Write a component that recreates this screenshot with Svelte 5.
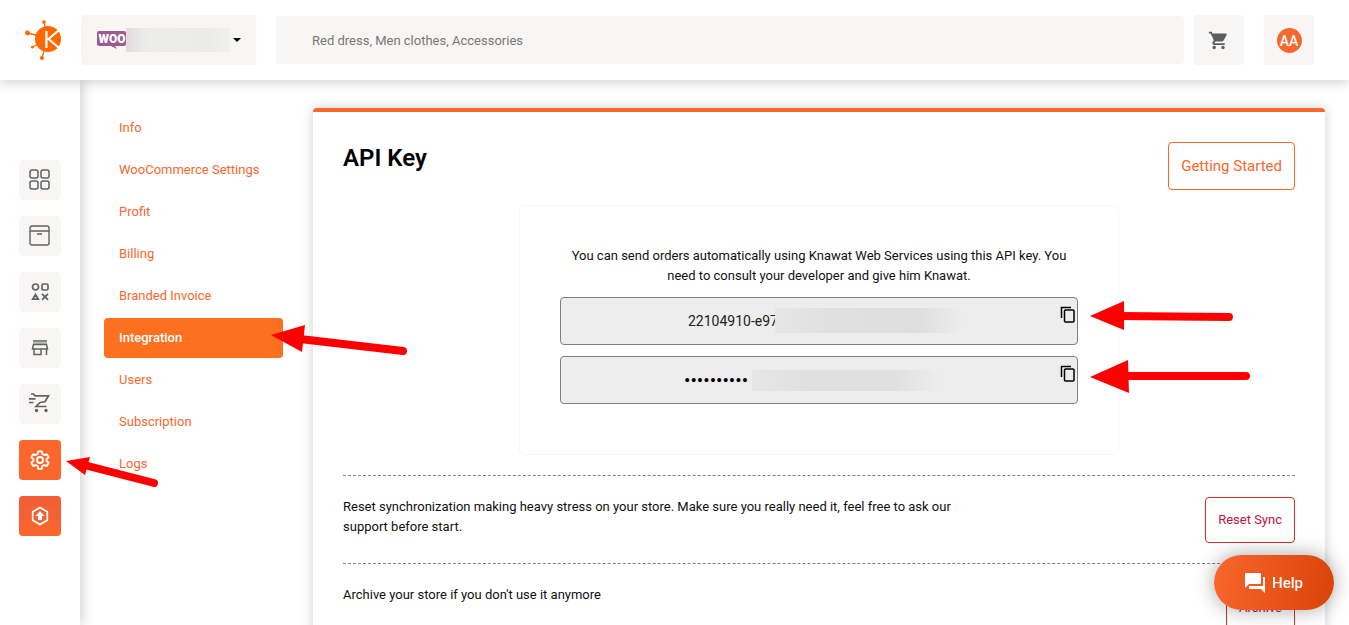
<script lang="ts">
    const menu = ["Info", "WooCommerce Settings", "Profit", "Billing", "Branded Invoice", "Integration", "Users", "Subscription", "Logs"];
    const rail = ["dashboard", "products", "categories", "store", "orders", "settings", "upgrade"];

    let active = $state("Integration");
    let search = $state("");

    const apiKey = "22104910-e97";
    const apiSecret = "knawat-key";

    function copy(value: string) {
        navigator.clipboard?.writeText(value);
    }
</script>

{#snippet copyIcon()}
    <svg width="16" height="18" viewBox="0 0 16 18" fill="none" stroke="#000" stroke-width="1.5">
        <path d="M1.5 12V1.5H11" />
        <rect x="4.5" y="4" width="9.5" height="12" rx="1" />
    </svg>
{/snippet}

<header>
    <a class="logo" href="/" aria-label="Home">
        <svg width="38" height="42" viewBox="0 0 38 42">
            <g stroke="#ff6700" stroke-width="1.3">
                <path d="M20 3l1.500 6M3.500 14l10 2.500M8.500 28l5-2.500M18 39l2.500-9" />
            </g>
            <g fill="#ff6700">
                <circle cx="20" cy="3" r="1.800" />
                <circle cx="3.500" cy="14" r="2.400" />
                <circle cx="8.500" cy="28" r="1.600" />
                <circle cx="18" cy="39" r="2.100" />
                <circle cx="24" cy="20" r="13" />
            </g>
            <path d="M22.400 12v17M34.500 11.500L24.500 20L34.500 28.500" fill="none" stroke="#fff" stroke-width="2.200" />
        </svg>
    </a>
    <label class="store-select">
        <svg width="29" height="18" viewBox="0 0 29 18">
            <path d="M2 0h25a2 2 0 0 1 2 2v11a2 2 0 0 1-2 2h-9l2 3-6-3H2a2 2 0 0 1-2-2V2a2 2 0 0 1 2-2z" fill="#9b5c8f" />
            <text x="15" y="12" text-anchor="middle" font-family="Roboto, sans-serif" font-weight="900" font-size="12" fill="#fff">WOO</text>
        </svg>
        <select aria-label="Store"><option></option></select>
        <svg class="caret" width="8" height="4" viewBox="0 0 8 4"><path d="M0 0h8L4 4z" /></svg>
    </label>
    <input class="search" type="search" aria-label="Search products" placeholder="Red dress, Men clothes, Accessories" bind:value={search} />
    <button class="square" aria-label="Cart">
        <svg width="24" height="24" viewBox="0 0 24 24" fill="#5c5f60">
            <path d="M7 18a2 2 0 1 0 0 4 2 2 0 0 0 0-4zM1 2v2h2l3.600 7.600L5.200 14c-.7 1.300.3 3 1.800 3h12v-2H7.400l1.100-2H16c.7 0 1.400-.4 1.700-1l3.600-6.500A1 1 0 0 0 20.400 4H5.200l-.9-2H1zM17 18a2 2 0 1 0 0 4 2 2 0 0 0 0-4z" transform="translate(1 2) scale(.88)" />
        </svg>
    </button>
    <button class="square account"><span class="avatar">AA</span></button>
</header>

<div class="layout">
    <nav class="rail">
        {#each rail as item (item)}
            <a href="/{item}" aria-label={item} class:hot={item === "settings"} class:upgrade={item === "upgrade"}>
                {#if item === "dashboard"}
                    <svg width="22" height="22" viewBox="0 0 22 22" fill="none" stroke="#626262" stroke-width="1.5">
                        <rect x="1" y="1" width="8" height="8" rx="2" />
                        <rect x="12" y="1" width="8" height="8" rx="2" />
                        <rect x="1" y="12" width="8" height="8" rx="2" />
                        <rect x="12" y="12" width="8" height="8" rx="2" />
                    </svg>
                {:else if item === "products"}
                    <svg width="22" height="22" viewBox="0 0 22 22" fill="none" stroke="#626262" stroke-width="1.4">
                        <rect x="1" y="1" width="19" height="19" rx="2" />
                        <path d="M1 6h19M8 9h5" />
                    </svg>
                {:else if item === "categories"}
                    <svg width="18" height="18" viewBox="0 0 18 18" fill="none" stroke="#626262" stroke-width="1.700">
                        <circle cx="4.500" cy="4" r="3" />
                        <rect x="11" y="1" width="6" height="6" rx="1.500" />
                        <path d="M4.500 11.500L1.700 16.200h5.600zM11 10.800l6 6M17 10.800l-6 6" />
                    </svg>
                {:else if item === "store"}
                    <svg width="18" height="16" viewBox="0 0 18 16" fill="none" stroke="#626262" stroke-width="1.500">
                        <path d="M2 1h14" />
                        <path d="M2 3h14" stroke="#aaa" />
                        <path d="M2.500 4.500h13l1 4.500h-15zM3 9v5.500h7V9M15.500 9v6" />
                    </svg>
                {:else if item === "orders"}
                    <svg width="22" height="22" viewBox="0 0 22 22" fill="none" stroke="#626262" stroke-width="1.700">
                        <path d="M2 1h2.500l1.500 1.800h13.500l-3.500 6-5 .7-4 4h10.500M0 5.800h6.500M0 9.500h4.500" />
                        <circle cx="7.500" cy="17.500" r="1.700" fill="#626262" stroke="none" />
                        <circle cx="17" cy="17.500" r="1.700" fill="#626262" stroke="none" />
                    </svg>
                {:else if item === "settings"}
                    <svg width="22" height="22" viewBox="0 0 24 24" fill="none" stroke="#fff" stroke-width="2" stroke-linejoin="round">
                        <path d="M10 2.500h4l.6 3 1.900 1.100 2.900-1 2 3.500-2.300 2v1.900l2.300 2-2 3.500-2.900-1-1.900 1.100-.6 3h-4l-.6-3-1.900-1.100-2.900 1-2-3.500 2.300-2v-1.900l-2.300-2 2-3.500 2.900 1 1.900-1.100z" />
                        <circle cx="12" cy="12" r="3.300" />
                    </svg>
                {:else}
                    <svg width="20" height="20" viewBox="0 0 20 20">
                        <path d="M10 1.500l7.300 4.200v8.600L10 18.500l-7.300-4.200V5.700z" fill="none" stroke="#fff" stroke-width="1.700" />
                        <path d="M10 5l4.500 5H12v4H8v-4H5.500z" fill="#fff" />
                    </svg>
                {/if}
            </a>
        {/each}
    </nav>

    <nav class="menu">
        {#each menu as item (item)}
            <a href="#{item}" class:active={item === active} onclick={() => (active = item)}>{item}</a>
        {/each}
    </nav>

    <main>
        <div class="title">
            <h1>API Key</h1>
            <button class="outline">Getting Started</button>
        </div>
        <section class="keys">
            <p>You can send orders automatically using Knawat Web Services using this API key. You need to consult your developer and give him Knawat.</p>
            <div class="field">
                <input type="text" aria-label="API key" readonly value={apiKey} />
                <span class="mask key-mask"></span>
                <button aria-label="Copy API key" onclick={() => copy(apiKey)}>{@render copyIcon()}</button>
            </div>
            <div class="field">
                <input type="password" aria-label="API secret" readonly value={apiSecret} />
                <span class="mask secret-mask"></span>
                <button aria-label="Copy API secret" onclick={() => copy(apiSecret)}>{@render copyIcon()}</button>
            </div>
        </section>
        <section class="row">
            <p>Reset synchronization making heavy stress on your store. Make sure you really need it, feel free to ask our support before start.</p>
            <button class="outline danger">Reset Sync</button>
        </section>
        <section class="row">
            <p>Archive your store if you don't use it anymore</p>
            <button class="outline danger">Archive</button>
        </section>
    </main>
</div>

<button class="help">
    <svg width="20" height="20" viewBox="0 0 20 20" fill="#fff">
        <path d="M1 0h14a1 1 0 0 1 1 1v9a1 1 0 0 1-1 1H4l-4 4V1a1 1 0 0 1 1-1z" />
        <path d="M18 4h1a1 1 0 0 1 1 1v15l-4-4H5a1 1 0 0 1-1-1v-2h14z" />
    </svg>
    Help
</button>

<svg class="arrows" width="1349" height="625" viewBox="0 0 1349 625" fill="#f00" stroke="#f00" stroke-linecap="round" aria-hidden="true">
    <path d="M300 339L403 351M1120 316L1229 317M1125 376L1246 376M88 466L154 483" stroke-width="8" />
    <path d="M271 335L305 325L302 352zM1090 316L1124 301V330zM1090 377L1128 360L1129 393zM66 461L90 457L85 475z" stroke="none" />
</svg>

<style>
    :global(body) {
        margin: 0;
        background: white;
        font-family: Roboto, "Noto Sans", sans-serif;
        font-size: 13px;
        line-height: 20px;
        color: #111;
    }

    :global(html) {
        scrollbar-width: none;
    }

    button, input, select {
        font: inherit;
        box-sizing: border-box;
    }

    button {
        cursor: pointer;
    }

    a {
        text-decoration: none;
    }

    header {
        position: sticky;
        top: 0;
        z-index: 2;
        display: flex;
        align-items: center;
        height: 80px;
        box-sizing: border-box;
        padding: 0 35px 0 24px;
        background: white;
        box-shadow: 0 2px 12px rgba(0, 0, 0, 0.2);
    }

    .logo {
        display: flex;
        width: 57px;
    }

    .store-select {
        display: flex;
        align-items: center;
        width: 175px;
        height: 50px;
        box-sizing: border-box;
        padding: 0 15px 0 16px;
        margin-right: 20px;
        border-radius: 4px;
        background: #f7f6f4;
    }

    .store-select select {
        flex: 1;
        min-width: 0;
        height: 24px;
        appearance: none;
        border: none;
        background: linear-gradient(90deg, #e3dae0, #ececeb 20%, #ebebea 80%, #f0f0ef);
    }

    .caret {
        margin-left: 3px;
    }

    .search {
        flex: 1;
        min-width: 0;
        height: 48px;
        padding: 0 36px;
        margin-right: 10px;
        border: none;
        border-radius: 4px;
        background: #f7f6f4;
    }

    .search::placeholder {
        color: #777;
    }

    .square {
        display: flex;
        align-items: center;
        justify-content: center;
        width: 50px;
        height: 50px;
        padding: 0;
        border: none;
        border-radius: 4px;
        background: #f7f6f4;
    }

    .account {
        margin-left: 20px;
    }

    .avatar {
        width: 25px;
        height: 25px;
        border-radius: 50%;
        background: #f9672d;
        color: white;
        font-size: 14px;
        font-weight: 500;
        line-height: 26px;
    }

    .layout {
        display: flex;
        align-items: flex-start;
    }

    .rail {
        display: flex;
        flex-direction: column;
        align-items: center;
        gap: 16px;
        width: 80px;
        min-height: calc(100vh - 80px);
        box-sizing: border-box;
        padding-top: 80px;
        box-shadow: 2px 0 12px rgba(0, 0, 0, 0.2);
    }

    .rail a {
        display: flex;
        align-items: center;
        justify-content: center;
        width: 42px;
        height: 40px;
        border-radius: 4px;
        background: #f7f6f4;
    }

    .rail a.hot {
        background: #f9672d;
    }

    .rail a.upgrade {
        background: linear-gradient(#f15d36, #f9672d);
    }

    .menu {
        display: flex;
        flex-direction: column;
        gap: 2px;
        width: 179px;
        margin: 28px 30px 0 24px;
    }

    .menu a {
        padding: 10px 15px;
        border-radius: 4px;
        color: #f9672d;
        white-space: nowrap;
    }

    .menu a.active {
        background: #fd7020;
        color: white;
        font-weight: 500;
    }

    main {
        flex: 1;
        min-width: 0;
        padding: 30px;
        margin: 28px 24px 24px 0;
        border-top: 4px solid #f9672d;
        border-radius: 4px;
        box-shadow: 0 0 12px rgba(0, 0, 0, 0.2);
    }

    .title {
        display: flex;
        align-items: flex-start;
        justify-content: space-between;
    }

    h1 {
        margin: 0;
        font-size: 24px;
        line-height: 32px;
        font-weight: 600;
        color: black;
    }

    .outline {
        height: 48px;
        padding: 0 12px;
        border: 1px solid #f9672d;
        border-radius: 4px;
        background: white;
        color: #f9672d;
        font-size: 15px;
        white-space: nowrap;
    }

    .danger {
        height: 46px;
        border-color: #d32f2f;
        color: #c2113a;
        font-size: 13px;
    }

    .keys {
        max-width: 600px;
        box-sizing: border-box;
        margin: 15px auto 20px;
        padding: 40px 40px 50px;
        border: 1px solid #f7f7f7;
        border-radius: 6px;
    }

    .keys p {
        margin: 0 0 11px;
        text-align: center;
    }

    .field {
        position: relative;
        display: flex;
        align-items: flex-start;
        height: 48px;
        box-sizing: border-box;
        border: 1px solid #808080;
        border-radius: 4px;
        background: #ededed;
    }

    .field + .field {
        margin-top: 11px;
    }

    .field input {
        flex: 1;
        min-width: 0;
        height: 46px;
        padding: 0 0 0 127px;
        border: none;
        background: none;
        color: #222;
        font-size: 14px;
    }

    .field input[type="password"] {
        padding-left: 123px;
        color: black;
        font-size: 19px;
    }

    .field button {
        display: flex;
        padding: 8px 1px 0 0;
        border: none;
        background: none;
    }

    .mask {
        position: absolute;
        width: 188px;
    }

    .key-mask {
        top: 10px;
        left: 214px;
        height: 25px;
        background: linear-gradient(90deg, #e6e6e6, #e0e0e0 30%, #dedede 75%, #ededed);
    }

    .secret-mask {
        top: 13px;
        left: 191px;
        height: 21px;
        background: linear-gradient(90deg, #e6e6e6, #e0e0e0 30%, #e0e0e0 75%, #ededed);
    }

    .row {
        display: flex;
        align-items: flex-start;
        justify-content: space-between;
        padding: 21px 0 20px;
        border-top: 1px dashed #808080;
    }

    .row p {
        max-width: 640px;
        margin: 0;
    }

    .help {
        position: fixed;
        right: 15px;
        bottom: 15px;
        z-index: 3;
        display: flex;
        align-items: center;
        justify-content: center;
        gap: 7px;
        width: 120px;
        height: 55px;
        border: none;
        border-radius: 28px;
        background: linear-gradient(100deg, #f9672d, #d9430a);
        box-shadow: 0 0 20px rgba(0, 0, 0, 0.35);
        color: white;
        font-size: 15px;
        font-weight: 500;
    }

    .arrows {
        position: absolute;
        top: 0;
        left: 0;
        z-index: 4;
        pointer-events: none;
    }
</style>
